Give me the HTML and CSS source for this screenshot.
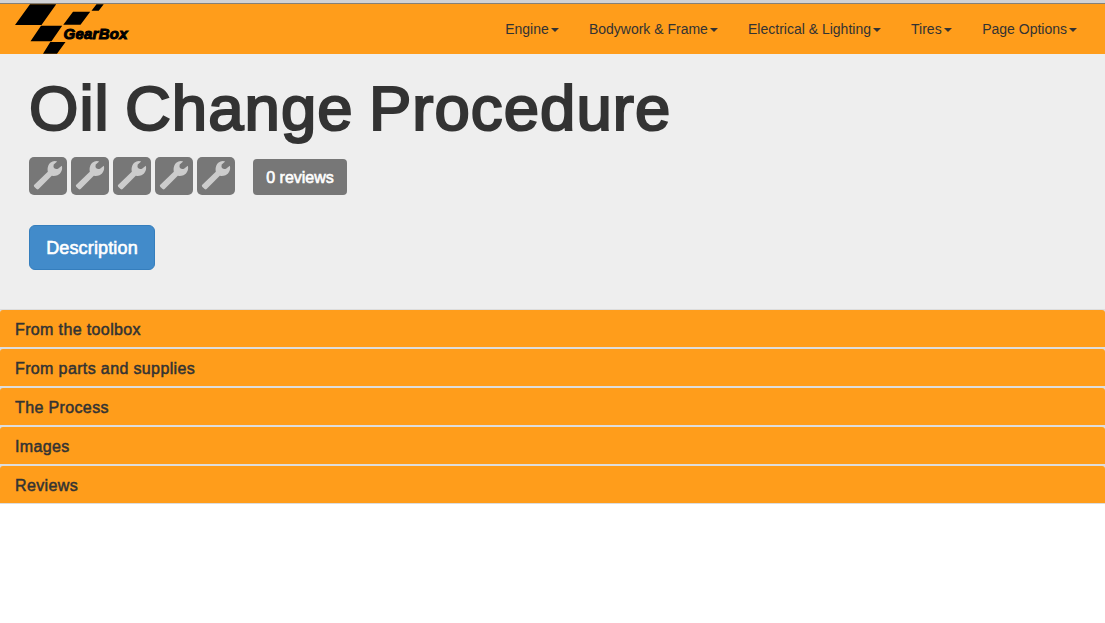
FILE: index.html
```html
<!DOCTYPE html>
<html lang="en">
<head>
<meta charset="utf-8">
<title>Oil Change Procedure</title>
<link rel="stylesheet" href="styles.css">
</head>
<body>
<svg class="defs" width="0" height="0" aria-hidden="true">
  <symbol id="wrench" viewBox="0 0 38 38">
    <path d="M5.300 27.700 18.800 14.800C18 10.300 19.500 6 23.500 4.500Q26 3.600 28.200 4.600L24.700 7.500Q24 10 25.300 11.300Q27 12.700 29 11.700L32.800 8.800C34 12.500 32 16.800 28.500 18.300Q26 19.100 22.800 18.800L9.600 32Q8.600 32.900 7.600 32L5.200 29.700Q4.300 28.700 5.300 27.700Z"/>
  </symbol>
</svg>
<header class="navbar">
  <a class="brand" href="#">
    <svg width="125" height="50" viewBox="0 0 125 50">
      <path d="M15 .3H41.200L26.500 21H0ZM26 21.700H47.200L36.500 37.300H15.500ZM35.300 38H50.500L42 49.700H28ZM58 7.700H75.200L65.500 20.700H48.300ZM81.500 .3H88.700L83.700 6.700H76.500Z"/>
      <text class="brand-name" x="48.500" y="34.700" textLength="64" lengthAdjust="spacing">GearBox</text>
    </svg>
  </a>
  <nav class="menu">
    <a href="#">Engine<b class="caret"></b></a>
    <a href="#">Bodywork &amp; Frame<b class="caret"></b></a>
    <a href="#">Electrical &amp; Lighting<b class="caret"></b></a>
    <a href="#">Tires<b class="caret"></b></a>
    <a href="#">Page Options<b class="caret"></b></a>
  </nav>
</header>
<section class="hero">
  <h1>Oil Change Procedure</h1>
  <div class="rating">
    <svg class="tile"><use href="#wrench"/></svg>
    <svg class="tile"><use href="#wrench"/></svg>
    <svg class="tile"><use href="#wrench"/></svg>
    <svg class="tile"><use href="#wrench"/></svg>
    <svg class="tile"><use href="#wrench"/></svg>
    <span class="reviews">0 reviews</span>
  </div>
  <a class="button" href="#">Description</a>
</section>
<main class="panels">
  <div class="panel"><h4>From the toolbox</h4></div>
  <div class="panel"><h4>From parts and supplies</h4></div>
  <div class="panel"><h4>The Process</h4></div>
  <div class="panel"><h4>Images</h4></div>
  <div class="panel"><h4>Reviews</h4></div>
</main>
</body>
</html>
```
FILE: styles.css
```css
* { box-sizing: border-box; }
body {
  margin: 0;
  background: #fff;
  color: #333;
  font: 14px/20px "Liberation Sans", Arial, sans-serif;
  border-top: 3px solid #d2d2d4;
}
a { color: inherit; text-decoration: none; }
.defs { display: block; }
.navbar {
  display: flex;
  justify-content: space-between;
  height: 51px;
  padding: 0 13px 0 15px;
  background: #ff9d1b;
  border-top: 1px solid #858078;
}
.brand svg { display: block; }
.brand-name {
  font: italic 900 15px "Liberation Sans", Arial, sans-serif;
  stroke: #000;
  stroke-width: 1px;
}
.menu { display: flex; }
.menu a { padding: 15px 15px 15px 15.1px; }
.caret {
  display: inline-block;
  margin-left: 2px;
  vertical-align: middle;
  border-top: 4px solid #333;
  border-left: 4px solid transparent;
  border-right: 4px solid transparent;
}
.menu a:last-child { padding-left: 15.5px; }
.hero {
  height: 255px;
  padding: 20px 29px 0;
  background: #eee;
}
h1 {
  margin: 0;
  font-size: 63.5px;
  font-weight: 400;
  line-height: 69px;
  letter-spacing: 1.05px;
  word-spacing: -3.5px;
  -webkit-text-stroke: 2.2px #333;
  white-space: nowrap;
}
.rating {
  display: flex;
  align-items: flex-end;
  gap: 4px;
  height: 38px;
  margin-top: 14px;
}
.tile {
  width: 38px;
  height: 38px;
  border-radius: 5px;
  background: #777;
  fill: #ccc;
}
.reviews {
  width: 94px;
  height: 36px;
  margin-left: 14px;
  border-radius: 4px;
  background: #777;
  color: #fff;
  font-size: 16px;
  line-height: 38px;
  text-align: center;
  -webkit-text-stroke: .6px #fff;
}
.button {
  display: block;
  width: 126px;
  height: 45px;
  margin-top: 30px;
  border: 1px solid #357ebd;
  border-radius: 6px;
  background: #428bca;
  color: #fff;
  font-size: 18px;
  line-height: 45px;
  letter-spacing: .15px;
  text-align: center;
  -webkit-text-stroke: .6px #fff;
}
.panel {
  height: 39px;
  border: solid #ddd;
  border-width: 1px 0;
  background: #ddd;
}
.panel h4 {
  height: 37px;
  margin: 0;
  padding: 0 15px;
  border-radius: 3px 3px 0 0;
  background: #ff9d1b;
  font-size: 16px;
  font-weight: 400;
  line-height: 40px;
  letter-spacing: .37px;
  -webkit-text-stroke: .5px #333;
}
```
